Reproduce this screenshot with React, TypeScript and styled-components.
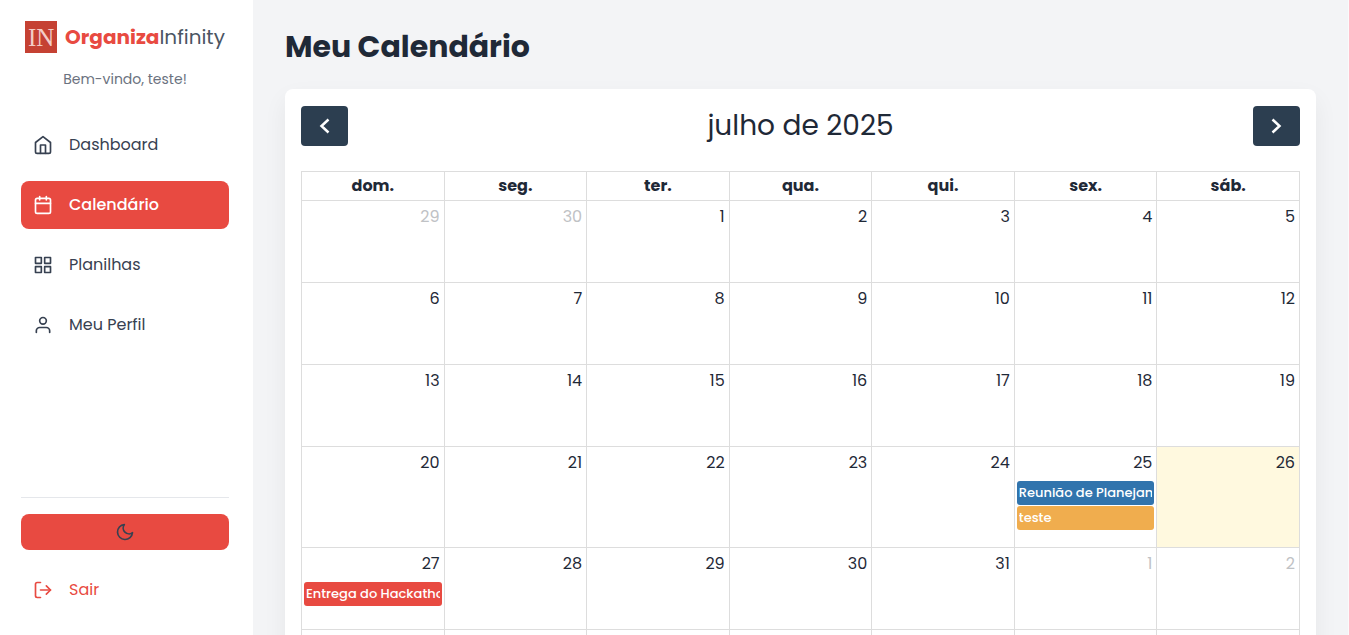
import React from "react";
import styled, { createGlobalStyle } from "styled-components";
import { FiCalendar, FiGrid, FiHome, FiLogOut, FiMoon, FiUser } from "react-icons/fi";

const GlobalStyle = createGlobalStyle`
  *, *::before, *::after { box-sizing: border-box; }
  body {
    margin: 0;
    background: #f3f4f6;
    color: #1f2937;
    font-family: Poppins, Inter, "Open Sans", sans-serif;
    font-size: 16px;
    line-height: 24px;
  }
  button { font: inherit; cursor: pointer; }
`;

const Shell = styled.div`
  display: flex;
  height: 100vh;
`;

const Sidebar = styled.aside`
  display: flex;
  flex-direction: column;
  flex: 0 0 253px;
  padding: 21px 24px 21px 21px;
  background: #fff;
`;

const Brand = styled.div`
  display: flex;
  align-items: center;
  justify-content: center;
  gap: 8px;
`;

const BrandName = styled.span`
  font-size: 20px;
  line-height: 32px;
  white-space: nowrap;
  color: #4b5563;
`;

const BrandStrong = styled.strong`
  font-weight: 700;
  color: #e84a41;
`;

const Welcome = styled.p`
  margin: 16px 0 32px;
  font-size: 14px;
  line-height: 20px;
  text-align: center;
  color: #6b7280;
`;

const Nav = styled.nav`
  display: flex;
  flex-direction: column;
  gap: 12px;
`;

const NavLink = styled.a<{ $tone?: "active" | "danger" }>`
  display: flex;
  align-items: center;
  gap: 16px;
  height: 48px;
  padding: 0 12px;
  border-radius: 8px;
  font-size: 16px;
  text-decoration: none;
  font-weight: ${(p) => (p.$tone === "active" ? 500 : 400)};
  color: ${(p) => (p.$tone === "active" ? "#fff" : p.$tone === "danger" ? "#e84a41" : "#374151")};
  background: ${(p) => (p.$tone === "active" ? "#e84a41" : "transparent")};
`;

const SidebarFooter = styled.div`
  display: flex;
  flex-direction: column;
  gap: 16px;
  margin-top: auto;
  padding-top: 16px;
  border-top: 1px solid #e5e7eb;
`;

const ThemeButton = styled.button`
  display: flex;
  align-items: center;
  justify-content: center;
  height: 36px;
  padding: 0;
  border: 0;
  border-radius: 8px;
  color: #374151;
  background: #e84a41;
`;

const Main = styled.main`
  flex: 1;
  min-width: 0;
  padding: 24px 32px;
  overflow-y: auto;
  scrollbar-width: none;
  border-right: 1px solid #fafafb;
`;

const PageTitle = styled.h1`
  margin: 0 0 20px;
  font-size: 30px;
  line-height: 45px;
  font-weight: 700;
`;

const Card = styled.section`
  padding: 17px 16px;
  border-radius: 8px;
  background: #fff;
  box-shadow: 0 10px 25px rgba(0, 0, 0, 0.06);
`;

const Toolbar = styled.div`
  display: flex;
  align-items: center;
  justify-content: space-between;
  height: 40px;
  margin-bottom: 25px;
`;

const MonthTitle = styled.h2`
  margin: 0;
  font-size: 28px;
  line-height: 40px;
  font-weight: 400;
`;

const StepButton = styled.button`
  display: flex;
  align-items: center;
  justify-content: center;
  width: 47px;
  height: 40px;
  padding: 0;
  border: 0;
  border-radius: 4px;
  color: #fff;
  background: #2c3e50;
`;

const MonthTable = styled.table`
  width: 100%;
  table-layout: fixed;
  border-collapse: collapse;
`;

const WeekdayCell = styled.th`
  height: 29px;
  padding: 0;
  border: 1px solid #ddd;
  font-weight: 700;
  line-height: 28px;
`;

const DayCell = styled.td<{ $today: boolean }>`
  height: 82px;
  padding: 0 2px;
  border: 1px solid #ddd;
  vertical-align: top;
  background: ${(p) => (p.$today ? "#fff9df" : "transparent")};
`;

const DayNumber = styled.div<{ $muted: boolean }>`
  padding: 4px 2px;
  margin-bottom: 2px;
  text-align: right;
  color: ${(p) => (p.$muted ? "#c0c2c5" : "#1f2937")};
`;

const EventList = styled.div`
  display: flex;
  flex-direction: column;
  gap: 1px;
  padding-bottom: 17px;
`;

const Event = styled.a<{ $color: string }>`
  display: block;
  height: 24px;
  padding: 0 2px;
  border-radius: 3px;
  text-decoration: none;
  color: #fff;
  background: ${(p) => p.$color};
`;

const EventTitle = styled.span`
  display: block;
  overflow: hidden;
  font-size: 13px;
  font-weight: 500;
  line-height: 23px;
  white-space: nowrap;
`;

const Logo = () => (
  <svg width="32" height="32" viewBox="0 0 32 32" role="img" aria-label="IN">
    <rect width="32" height="32" fill="#c54133" />
    <text x="3" y="25" fontFamily="Liberation Serif, serif" fontSize="25" fill="#f3cdc8">
      IN
    </text>
  </svg>
);

const Chevron = ({ points }: { points: string }) => (
  <svg width="24" height="24" viewBox="0 0 24 24" fill="none" stroke="currentColor" strokeWidth="2.5" aria-hidden="true">
    <polyline points={points} />
  </svg>
);

const weekdays = ["dom.", "seg.", "ter.", "qua.", "qui.", "sex.", "sáb."];

const events: Record<string, { title: string; color: string }[]> = {
  "6-25": [
    { title: "Reunião de Planejamento", color: "#3174ad" },
    { title: "teste", color: "#f0ad4e" },
  ],
  "6-27": [{ title: "Entrega do Hackathon", color: "#e84a41" }],
};

const weeks = Array.from({ length: 6 }, (_, week) =>
  Array.from({ length: 7 }, (_, day) => new Date(2025, 5, 29 + week * 7 + day)),
);

export default function App() {
  return (
    <>
      <GlobalStyle />
      <Shell>
        <Sidebar>
          <Brand>
            <Logo />
            <BrandName>
              <BrandStrong>Organiza</BrandStrong>Infinity
            </BrandName>
          </Brand>
          <Welcome>Bem-vindo, teste!</Welcome>
          <Nav>
            <NavLink href="#dashboard"><FiHome size={20} />Dashboard</NavLink>
            <NavLink href="#calendario" $tone="active" aria-current="page"><FiCalendar size={20} />Calendário</NavLink>
            <NavLink href="#planilhas"><FiGrid size={20} />Planilhas</NavLink>
            <NavLink href="#perfil"><FiUser size={20} />Meu Perfil</NavLink>
          </Nav>
          <SidebarFooter>
            <ThemeButton type="button" aria-label="Alternar tema"><FiMoon size={20} /></ThemeButton>
            <NavLink href="#sair" $tone="danger"><FiLogOut size={20} />Sair</NavLink>
          </SidebarFooter>
        </Sidebar>
        <Main>
          <PageTitle>Meu Calendário</PageTitle>
          <Card>
            <Toolbar>
              <StepButton type="button" aria-label="Mês anterior"><Chevron points="15.5,5.5 8.5,12 15.5,18.5" /></StepButton>
              <MonthTitle>julho de 2025</MonthTitle>
              <StepButton type="button" aria-label="Próximo mês"><Chevron points="8.5,5.5 15.5,12 8.5,18.5" /></StepButton>
            </Toolbar>
            <MonthTable>
              <thead>
                <tr>{weekdays.map((name) => <WeekdayCell key={name} scope="col">{name}</WeekdayCell>)}</tr>
              </thead>
              <tbody>
                {weeks.map((week, i) => (
                  <tr key={i}>
                    {week.map((date) => {
                      const key = `${date.getMonth()}-${date.getDate()}`;
                      return (
                        <DayCell key={key} $today={key === "6-26"}>
                          <DayNumber $muted={date.getMonth() !== 6}>{date.getDate()}</DayNumber>
                          {events[key] && (
                            <EventList>
                              {events[key].map((event) => (
                                <Event key={event.title} href="#evento" $color={event.color}>
                                  <EventTitle>{event.title}</EventTitle>
                                </Event>
                              ))}
                            </EventList>
                          )}
                        </DayCell>
                      );
                    })}
                  </tr>
                ))}
              </tbody>
            </MonthTable>
          </Card>
        </Main>
      </Shell>
    </>
  );
}
